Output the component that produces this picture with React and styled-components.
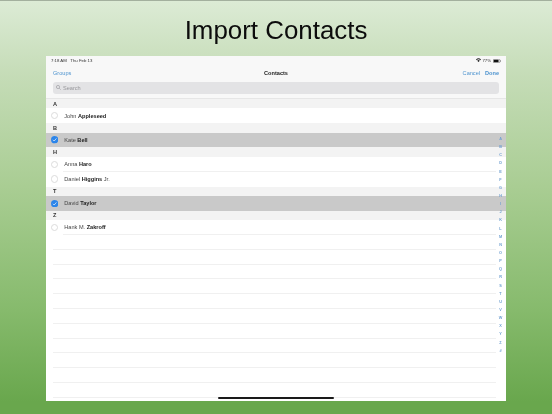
import React from "react";
import styled, { createGlobalStyle } from "styled-components";

const Global = createGlobalStyle`
  html, body { margin: 0; padding: 0; }
  body { font-family: "Liberation Sans", Arial, sans-serif; }
`;

const Page = styled.div`
  width: 552px; height: 414px; overflow: hidden; box-sizing: border-box;
  display: flex; flex-direction: column; align-items: center;
  border-top: 1px solid #a3b09e;
  background: linear-gradient(180deg, #dcebd5 0%, #c5dcb7 18%, #a9cd93 45%, #86ba6c 75%, #69a74d 97%);
`;
const Title = styled.h1`
  margin: 0; height: 55px; line-height: 58px;
  font-size: 25.9px; font-weight: 400; color: #0c0c0c;
  filter: blur(0.2px);
`;
const Screen = styled.div`
  width: 460px; height: 345px; background: #fff; position: relative; overflow: hidden;
  display: flex; flex-direction: column; filter: blur(0.3px);
`;
const Header = styled.div`
  background: #f8f8f8; height: 43px; box-sizing: border-box; border-bottom: 1px solid #e6e6e6;
  display: flex; flex-direction: column; flex: none;
`;
const StatusBar = styled.div`
  height: 9px; padding: 0 5.5px 0 5px; display: flex; align-items: center; justify-content: space-between;
  font-size: 4.3px; color: #333; flex: none;
`;
const StatusRight = styled.div`display: flex; align-items: center; gap: 1.5px;`;
const NavBar = styled.div`
  height: 15px; padding: 0 7px; display: grid; grid-template-columns: 1fr auto 1fr; align-items: center;
  font-size: 5.6px; flex: none;
`;
const NavTitle = styled.span`font-weight: 700; color: #222;`;
const NavActions = styled.span`justify-self: end;`;
const NavLink = styled.span`
  color: #4f94cf; font-weight: ${p => (p.$strong ? 700 : 400)};
  margin-left: ${p => (p.$strong ? "5px" : 0)};
`;
const Search = styled.div`
  margin: 2px 7px 0; height: 11.7px; border-radius: 3px; background: #e3e3e5; flex: none;
  display: flex; align-items: center; gap: 2px; padding-left: 3px;
  font-size: 5.6px; color: #96969a;
`;
const SectionHead = styled.div`
  height: 9.43px; background: #f3f3f3; padding-left: 7px; flex: none;
  display: flex; align-items: center;
  font-size: 5.6px; font-weight: 700; color: #333;
`;
const Row = styled.div`
  height: 14.82px; flex: none; display: flex; align-items: center; padding-left: 5px;
  background: ${p => (p.$selected ? "#c9c9c9" : "#fff")};
`;
const RowBody = styled.div`
  flex: 1; align-self: stretch; margin-left: 5px; margin-right: 10px; display: flex; align-items: center;
  font-size: 5.6px; color: #444; padding-left: 1px;
  border-bottom: ${p => (p.$line ? "0.6px solid #f0f0f0" : "none")};
`;
const Bold = styled.b`color: #222; font-weight: 700;`;
const Circle = styled.span`
  width: 7.3px; height: 7.3px; border-radius: 50%; box-sizing: border-box; flex: none;
  border: 0.6px solid #dcdcdc; background: #fff;
`;
const Check = styled.svg`width: 7.3px; height: 7.3px; flex: none; display: block;`;
const EmptyRows = styled.div`flex: 1; display: flex; flex-direction: column; overflow: hidden;`;
const EmptyRow = styled.div`
  height: 14.82px; flex: none; box-sizing: border-box; margin: 0 10px 0 7px;
  border-bottom: 0.7px solid #f0f0f0;
`;
const Index = styled.div`
  position: absolute; right: 1px; top: 80px; width: 9px; height: 218px;
  display: flex; flex-direction: column; align-items: center; justify-content: space-between;
  font-size: 3.8px; font-weight: 700; color: #6f9fd0; line-height: 6px;
`;
const HomeBar = styled.div`
  position: absolute; left: 172px; bottom: 2px; width: 116px; height: 2px; border-radius: 1px; background: #1a1a1a;
`;

const SelectMark = ({ on }) =>
  on ? (
    <Check viewBox="0 0 14 14">
      <circle cx="7" cy="7" r="7" fill="#2b85ea" />
      <path d="M3.8 7.3 L6.1 9.6 L10.4 4.6" fill="none" stroke="#fff" strokeWidth="1.3" />
    </Check>
  ) : (
    <Circle />
  );

const sections = [
  ["A", [["John ", "Appleseed", ""]]],
  ["B", [["Kate ", "Bell", "", true]]],
  ["H", [["Anna ", "Haro", ""], ["Daniel ", "Higgins", " Jr."]]],
  ["T", [["David ", "Taylor", "", true]]],
  ["Z", [["Hank M. ", "Zakroff", ""]]],
];

export default function App() {
  return (
    <Page>
      <Global />
      <Title>Import Contacts</Title>
      <Screen>
        <Header>
          <StatusBar>
            <span>7:18 AM&nbsp;&nbsp;&nbsp;Thu Feb 13</span>
            <StatusRight>
              <svg width="5" height="4.2" viewBox="0 0 12 10">
                <path d="M0 3.5 A8.5 8.5 0 0 1 12 3.5 L10.4 5.2 A6 6 0 0 0 1.6 5.2 Z M3 6.4 A4.2 4.2 0 0 1 9 6.4 L6 9.6 Z" fill="#222" />
              </svg>
              <span>77%</span>
              <svg width="8" height="4" viewBox="0 0 18 9">
                <rect x="0.5" y="0.5" width="15" height="8" rx="2" fill="none" stroke="#555" />
                <rect x="1.5" y="1.5" width="11" height="6" rx="1" fill="#111" />
                <rect x="16.3" y="3" width="1.4" height="3" fill="#555" />
              </svg>
            </StatusRight>
          </StatusBar>
          <NavBar>
            <NavLink>Groups</NavLink>
            <NavTitle>Contacts</NavTitle>
            <NavActions>
              <NavLink>Cancel</NavLink>
              <NavLink $strong>Done</NavLink>
            </NavActions>
          </NavBar>
          <Search>
            <svg width="5" height="5" viewBox="0 0 10 10">
              <circle cx="4" cy="4" r="3.2" fill="none" stroke="#96969a" strokeWidth="1.2" />
              <path d="M6.4 6.4 L9.4 9.4" stroke="#96969a" strokeWidth="1.2" />
            </svg>
            Search
          </Search>
        </Header>
        {sections.map(([letter, rows]) => (
          <React.Fragment key={letter}>
            <SectionHead>{letter}</SectionHead>
            {rows.map(([first, last, suffix, selected], i) => (
              <Row key={last} $selected={selected}>
                <SelectMark on={selected} />
                <RowBody $line={!selected && (i < rows.length - 1 || letter === "Z")}>
                  <span>
                    {first}
                    <Bold>{last}</Bold>
                    {suffix}
                  </span>
                </RowBody>
              </Row>
            ))}
          </React.Fragment>
        ))}
        <EmptyRows>
          {Array.from({ length: 11 }, (_, i) => (
            <EmptyRow key={i} />
          ))}
        </EmptyRows>
        <Index>
          {"ABCDEFGHIJKLMNOPQRSTUVWXYZ#".split("").map(c => (
            <span key={c}>{c}</span>
          ))}
        </Index>
        <HomeBar />
      </Screen>
    </Page>
  );
}
